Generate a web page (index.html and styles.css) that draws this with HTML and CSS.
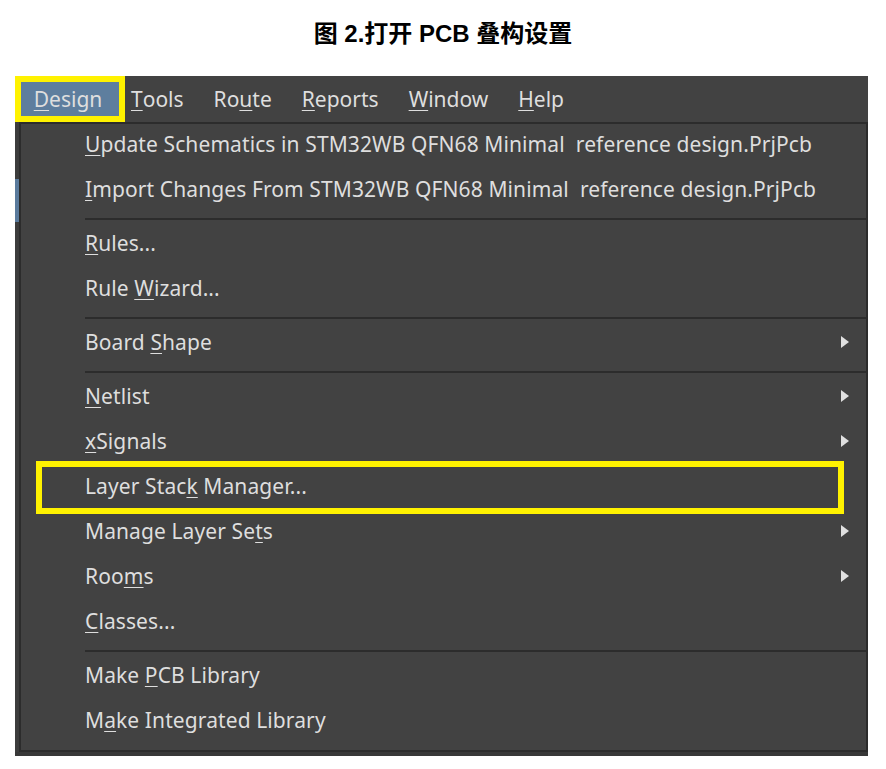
FILE: index.html
```html
<!DOCTYPE html>
<html lang="zh">
<head>
    <meta charset="utf-8">
    <title>图 2.打开 PCB 叠构设置</title>
    <link rel="stylesheet" href="styles.css">
</head>
<body>
    <h1 class="caption">图 2.打开 PCB 叠构设置</h1>
    <div class="app">
        <div class="menubar">
            <span class="top-item active"><u>D</u>esign</span>
            <span class="top-item"><u>T</u>ools</span>
            <span class="top-item">Ro<u>u</u>te</span>
            <span class="top-item"><u>R</u>eports</span>
            <span class="top-item"><u>W</u>indow</span>
            <span class="top-item"><u>H</u>elp</span>
        </div>
        <div class="below">
            <div class="underlay">
                <div class="tab-mark"></div>
            </div>
            <div class="dropdown">
                <div class="item"><u>U</u>pdate Schematics in STM32WB QFN68 Minimal&nbsp; reference design.PrjPcb</div>
                <div class="item"><u>I</u>mport Changes From STM32WB QFN68 Minimal&nbsp; reference design.PrjPcb</div>
                <div class="sep"></div>
                <div class="item"><u>R</u>ules...</div>
                <div class="item">Rule <u>W</u>izard...</div>
                <div class="sep"></div>
                <div class="item sub">Board <u>S</u>hape</div>
                <div class="sep"></div>
                <div class="item sub"><u>N</u>etlist</div>
                <div class="item sub"><u>x</u>Signals</div>
                <div class="item marked">Layer Stac<u>k</u> Manager...</div>
                <div class="item sub">Manage Layer Se<u>t</u>s</div>
                <div class="item sub">Roo<u>m</u>s</div>
                <div class="item"><u>C</u>lasses...</div>
                <div class="sep"></div>
                <div class="item">Make <u>P</u>CB Library</div>
                <div class="item">M<u>a</u>ke Integrated Library</div>
            </div>
        </div>
    </div>
</body>
</html>
```

FILE: styles.css
```css
body {
    margin: 0;
    padding: 0;
    background-color: #fff;
    font-family: "Noto Sans", "Liberation Sans", sans-serif;
}

.caption {
    margin: 0;
    padding-top: 14px;
    height: 76px;
    box-sizing: border-box;
    text-align: center;
    font-family: "Liberation Sans", "Noto Sans CJK SC", sans-serif;
    font-size: 24px;
    font-weight: bold;
    color: #000;
}

.app {
    margin-left: 15px;
    width: 853px;
    padding-bottom: 4px;
    background-color: #383838;
}

.menubar {
    display: flex;
    height: 46px;
    background-color: #424242;
    color: #dedede;
    font-size: 21px;
}

.top-item {
    display: flex;
    align-items: center;
    padding: 0 15px;
}

.top-item u {
    text-decoration-thickness: 1px;
    text-underline-offset: 3px;
}

.top-item.active {
    width: 110px;
    box-sizing: border-box;
    justify-content: center;
    padding: 0 4px 0 0;
    margin-right: -9px;
    border: 6px solid #fff200;
    background-color: #5e7e9e;
}

.below {
    display: flex;
}

.underlay {
    width: 4px;
    background-color: #3c3c3c;
}

.tab-mark {
    height: 43px;
    margin-top: 57px;
    background-color: #5a7a9c;
}

.dropdown {
    flex: 1;
    background-color: #424242;
    border: 2px solid #2c2c2c;
    padding: 0 0 5px 0;
    color: #dedede;
    font-size: 21px;
    letter-spacing: 0.1px;
}

.item {
    position: relative;
    height: 45px;
    line-height: 41px;
    padding-left: 64px;
    white-space: nowrap;
}

.item u {
    text-decoration-thickness: 1px;
    text-underline-offset: 3px;
}

.item.sub::after {
    content: "";
    position: absolute;
    right: 17px;
    top: 14px;
    border-left: 8px solid #e0e0e0;
    border-top: 6px solid transparent;
    border-bottom: 6px solid transparent;
}

.item.marked::before {
    content: "";
    position: absolute;
    left: 15px;
    right: 22px;
    top: -5px;
    bottom: -3px;
    border: 6px solid #fff200;
}

.sep {
    height: 2px;
    margin: 4px 0 3px 64px;
    background-color: #2c2c2c;
}
```
